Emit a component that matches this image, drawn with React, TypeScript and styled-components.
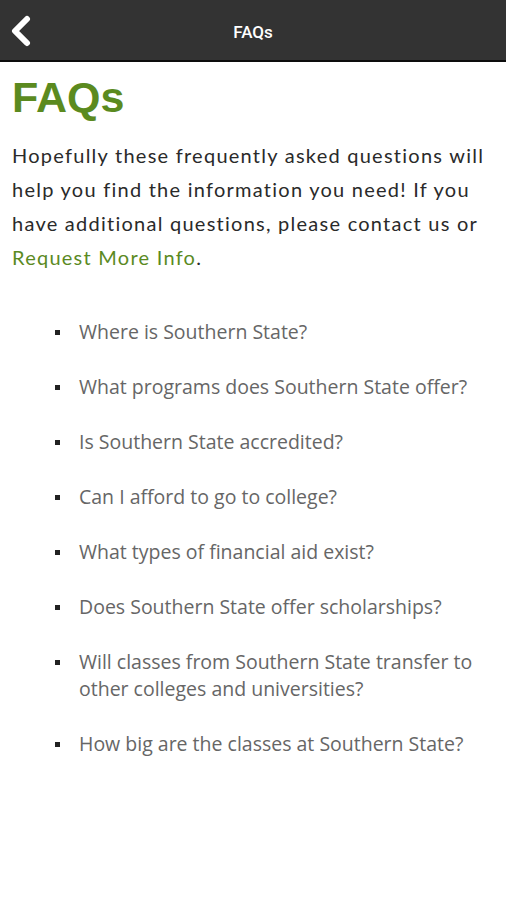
import styled, { createGlobalStyle } from 'styled-components'

const GlobalStyle = createGlobalStyle`
  body {
    margin: 0;
    background: #ffffff;
  }
`

const Page = styled.div`
  width: 506px;
  min-height: 900px;
  background: #fff;
`

const TopBar = styled.header`
  display: flex;
  align-items: center;
  justify-content: center;
  position: relative;
  height: 60px;
  background: #333333;
  border-bottom: 2px solid #0d0d0d;
`

const BackButton = styled.button`
  position: absolute;
  left: 7px;
  top: 14px;
  width: 28px;
  height: 34px;
  padding: 0;
  border: none;
  background: none;
  display: flex;
  align-items: center;
  justify-content: center;
`

const BarTitle = styled.h2`
  margin: 4px 0 0;
  color: #ffffff;
  font-family: Roboto, 'Liberation Sans', sans-serif;
  font-size: 17px;
  font-weight: 500;
`

const Content = styled.main`
  padding: 6px 12px 0;
`

const Heading = styled.h1`
  margin: 0;
  color: #5b8a1f;
  font-family: 'Liberation Sans', Arial, sans-serif;
  font-size: 43px;
  font-weight: 700;
  line-height: 58px;
`

const Intro = styled.p`
  margin: 12px 0 0;
  color: #2a2a2a;
  font-family: Lato, 'Noto Sans', sans-serif;
  font-size: 20px;
  line-height: 34px;
  letter-spacing: 1.25px;
`

const Link = styled.a`
  color: #5b8a1f;
  text-decoration: none;
`

const List = styled.ul`
  list-style: none;
  margin: 44px 0 0;
  padding: 0 0 0 43px;
  display: flex;
  flex-direction: column;
  gap: 28px;
`

const Item = styled.li`
  position: relative;
  padding-left: 24px;
  color: #666666;
  font-family: 'Open Sans', 'Noto Sans', sans-serif;
  font-size: 19.5px;
  line-height: 27px;

  &::before {
    content: '';
    position: absolute;
    left: 0;
    top: 12px;
    width: 5px;
    height: 5px;
    background: #222;
  }
`

const questions = [
  'Where is Southern State?',
  'What programs does Southern State offer?',
  'Is Southern State accredited?',
  'Can I afford to go to college?',
  'What types of financial aid exist?',
  'Does Southern State offer scholarships?',
  'Will classes from Southern State transfer to other colleges and universities?',
  'How big are the classes at Southern State?',
]

export default function App() {
  return (
    <>
      <GlobalStyle />
      <Page>
        <TopBar>
          <BackButton aria-label='Back'>
            <svg width='24' height='32' viewBox='0 0 24 32'>
              <path
                d='M18 4 L6 16 L18 28'
                fill='none'
                stroke='#ffffff'
                strokeWidth='6'
                strokeLinecap='round'
                strokeLinejoin='round'
              />
            </svg>
          </BackButton>
          <BarTitle>FAQs</BarTitle>
        </TopBar>
        <Content>
          <Heading>FAQs</Heading>
          <Intro>
            Hopefully these frequently asked questions will help you find the
            information you need! If you have additional questions, please
            contact us or <Link href='#'>Request More Info</Link>.
          </Intro>
          <List>
            {questions.map((q) => (
              <Item key={q}>{q}</Item>
            ))}
          </List>
        </Content>
      </Page>
    </>
  )
}
